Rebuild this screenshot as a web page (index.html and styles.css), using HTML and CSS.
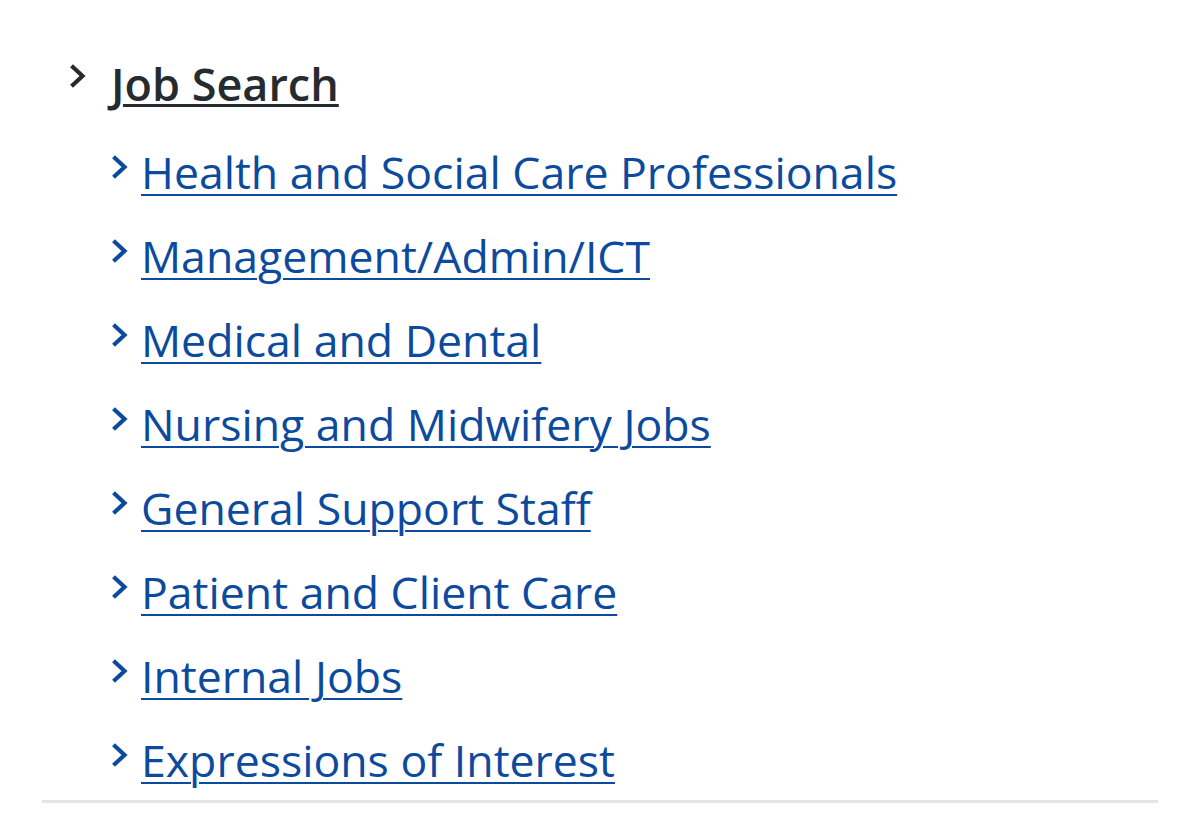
FILE: index.html
```html
<!DOCTYPE html>
<html lang="en">
<head>
<meta charset="utf-8">
<title>Job Search</title>
<link rel="stylesheet" href="styles.css">
</head>
<body>
<nav class="menu">
  <div class="heading-row">
    <svg class="chev chev-dark" viewBox="0 0 18 24" aria-hidden="true"><path d="M3.5 1.8 L14.5 12 L3.5 22.2"/></svg>
    <a class="heading" href="#">Job Search</a>
  </div>
  <ul class="items">
    <li><svg class="chev chev-blue" viewBox="0 0 18 24" aria-hidden="true"><path d="M3.5 1.8 L14.5 12 L3.5 22.2"/></svg><a href="#">Health and Social Care Professionals</a></li>
    <li><svg class="chev chev-blue" viewBox="0 0 18 24" aria-hidden="true"><path d="M3.5 1.8 L14.5 12 L3.5 22.2"/></svg><a href="#">Management/Admin/ICT</a></li>
    <li><svg class="chev chev-blue" viewBox="0 0 18 24" aria-hidden="true"><path d="M3.5 1.8 L14.5 12 L3.5 22.2"/></svg><a href="#">Medical and Dental</a></li>
    <li><svg class="chev chev-blue" viewBox="0 0 18 24" aria-hidden="true"><path d="M3.5 1.8 L14.5 12 L3.5 22.2"/></svg><a href="#">Nursing and Midwifery Jobs</a></li>
    <li><svg class="chev chev-blue" viewBox="0 0 18 24" aria-hidden="true"><path d="M3.5 1.8 L14.5 12 L3.5 22.2"/></svg><a href="#">General Support Staff</a></li>
    <li><svg class="chev chev-blue" viewBox="0 0 18 24" aria-hidden="true"><path d="M3.5 1.8 L14.5 12 L3.5 22.2"/></svg><a href="#">Patient and Client Care</a></li>
    <li><svg class="chev chev-blue" viewBox="0 0 18 24" aria-hidden="true"><path d="M3.5 1.8 L14.5 12 L3.5 22.2"/></svg><a href="#">Internal Jobs</a></li>
    <li><svg class="chev chev-blue" viewBox="0 0 18 24" aria-hidden="true"><path d="M3.5 1.8 L14.5 12 L3.5 22.2"/></svg><a href="#">Expressions of Interest</a></li>
  </ul>
</nav>
</body>
</html>
```

FILE: styles.css
```css
html, body {
  margin: 0;
  padding: 0;
  background: #ffffff;
}
body {
  font-family: "Open Sans", "Noto Sans", sans-serif;
}
.menu {
  margin: 0 42px;
  padding-top: 49px;
  border-bottom: 3px solid #e4e4e4;
}
.heading-row {
  display: flex;
  align-items: flex-start;
  padding-left: 26px;
  height: 70px;
}
.chev {
  flex: none;
  width: 18px;
  height: 24px;
  fill: none;
  stroke-linecap: butt;
  stroke-linejoin: miter;
}
.chev-dark {
  stroke: #262b2f;
  stroke-width: 4.2;
  margin-top: 15px;
  margin-right: 25px;
}
.heading {
  font-size: 45px;
  line-height: 70px;
  font-weight: 600;
  color: #262b2f;
  text-decoration: underline;
  text-decoration-thickness: 3px;
  text-underline-offset: 3px;
}
.items {
  list-style: none;
  margin: 9px 0 0;
  padding: 0 0 0 68px;
}
.items li {
  display: flex;
  align-items: flex-start;
  height: 84px;
}
.chev-blue {
  stroke: #0c4a9e;
  stroke-width: 4.2;
  margin-top: 27px;
  margin-right: 13px;
}
.items a {
  font-size: 44.6px;
  line-height: 88px;
  color: #0c4a9e;
  text-decoration: underline;
  text-decoration-thickness: 2px;
  text-underline-offset: 5px;
}
```
